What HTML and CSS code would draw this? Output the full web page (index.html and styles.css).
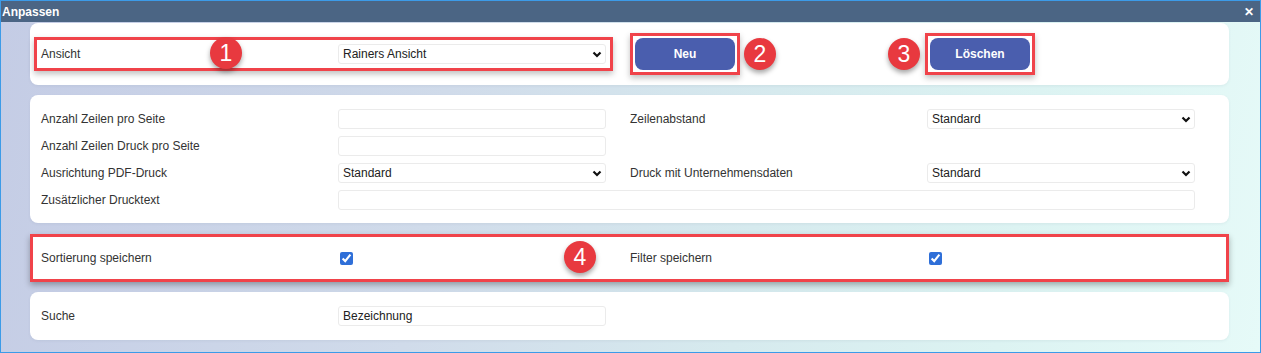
FILE: index.html
```html
<!DOCTYPE html>
<html lang="de">
<head>
    <meta charset="UTF-8">
    <meta name="viewport" content="width=device-width, initial-scale=1.0">
    <title>Anpassen</title>
    <link rel="stylesheet" href="styles.css">
</head>
<body>
    <div class="window">
        <!-- Titelleiste -->
        <div class="title-bar">
            <span>Anpassen</span>
            <span class="close">&#x2715;</span>
        </div>

        <div class="content">
            <!-- Ansicht -->
            <div class="card card-view">
                <div class="field-group marked">
                    <span class="label">Ansicht</span>
                    <div class="select-wrap">
                        <select class="field">
                            <option>Rainers Ansicht</option>
                        </select>
                        <svg class="chevron" width="10" height="7" viewBox="0 0 10 7"><path d="M1.5 1.5 L5 5 L8.5 1.5" fill="none" stroke="#111" stroke-width="2.2"/></svg>
                    </div>
                </div>
                <div class="btn-cell btn-new"><span class="btn-frame"><button class="btn">Neu</button></span></div>
                <div class="btn-cell btn-delete"><span class="btn-frame"><button class="btn">Löschen</button></span></div>
                <span class="badge badge-1">1</span>
                <span class="badge badge-2">2</span>
                <span class="badge badge-3">3</span>
            </div>

            <!-- Seiten- und Druckeinstellungen -->
            <div class="card">
                <span class="label">Anzahl Zeilen pro Seite</span>
                <input class="field" type="text">
                <span class="label">Zeilenabstand</span>
                <div class="select-wrap">
                    <select class="field"><option>Standard</option></select>
                    <svg class="chevron" width="10" height="7" viewBox="0 0 10 7"><path d="M1.5 1.5 L5 5 L8.5 1.5" fill="none" stroke="#111" stroke-width="2.2"/></svg>
                </div>

                <span class="label">Anzahl Zeilen Druck pro Seite</span>
                <input class="field" type="text">
                <span></span>
                <span></span>

                <span class="label">Ausrichtung PDF-Druck</span>
                <div class="select-wrap">
                    <select class="field"><option>Standard</option></select>
                    <svg class="chevron" width="10" height="7" viewBox="0 0 10 7"><path d="M1.5 1.5 L5 5 L8.5 1.5" fill="none" stroke="#111" stroke-width="2.2"/></svg>
                </div>
                <span class="label">Druck mit Unternehmensdaten</span>
                <div class="select-wrap">
                    <select class="field"><option>Standard</option></select>
                    <svg class="chevron" width="10" height="7" viewBox="0 0 10 7"><path d="M1.5 1.5 L5 5 L8.5 1.5" fill="none" stroke="#111" stroke-width="2.2"/></svg>
                </div>

                <span class="label">Zusätzlicher Drucktext</span>
                <input class="field field-wide" type="text">
            </div>

            <!-- Speichern -->
            <div class="card card-save">
                <span class="label">Sortierung speichern</span>
                <input class="check" type="checkbox" checked>
                <span class="label">Filter speichern</span>
                <input class="check" type="checkbox" checked>
                <span class="badge badge-4">4</span>
            </div>

            <!-- Suche -->
            <div class="card card-search">
                <span class="label">Suche</span>
                <input class="field" type="text" value="Bezeichnung">
            </div>
        </div>
    </div>
</body>
</html>
```

FILE: styles.css
```css
* {
    box-sizing: border-box;
}

body {
    margin: 0;
    font-family: "Liberation Sans", Arial, sans-serif;
    font-size: 12px;
    color: #333;
}

.window {
    width: 1261px;
    height: 353px;
    border: 1px solid #3c9be8;
    display: flex;
    flex-direction: column;
    background: linear-gradient(100deg, #c4cce5 0%, #d0dbea 35%, #d6eaee 60%, #dcf3f2 80%, #e6faf8 100%);
}

.title-bar {
    height: 21px;
    background: #4b6584;
    color: #fff;
    font-weight: bold;
    display: flex;
    justify-content: space-between;
    align-items: center;
    padding: 0 6px 0 1px;
}

.close {
    font-size: 12px;
}

.content {
    padding: 1px 31px 12px 29px;
    display: flex;
    flex-direction: column;
    gap: 10px;
}

.card {
    position: relative;
    background: #fff;
    border-radius: 8px;
    padding: 14px 11px 13px;
    display: grid;
    grid-template-columns: 297px 292px 297px 268px;
    grid-auto-rows: minmax(20px, auto);
    row-gap: 7px;
    align-items: center;
    box-shadow: 0 1px 3px rgba(80, 90, 120, 0.08);
}

.card-view {
    padding: 13px 11px;
}

.card-save {
    margin-top: 1px;
    padding: 14px 11px;
    border-radius: 0;
    box-shadow: inset 0 0 0 3px #f0434a, 0 3px 6px rgba(0, 0, 0, 0.3);
}

.card-search {
    padding: 14px 11px;
}

.label {
    color: #333;
    white-space: nowrap;
}

.field {
    width: 268px;
    height: 20px;
    border: 1px solid #ebebeb;
    border-radius: 3px;
    background: #fff;
    padding: 0 4px;
    font: inherit;
    color: #222;
    outline: none;
}

.field-wide {
    grid-column: 2 / 5;
    width: 100%;
}

.select-wrap {
    position: relative;
    width: 268px;
    height: 20px;
}

.select-wrap select {
    appearance: none;
    -webkit-appearance: none;
    padding-right: 20px;
}

.chevron {
    position: absolute;
    right: 4px;
    top: 7px;
    pointer-events: none;
}

.field-group {
    grid-column: 1 / 3;
    display: grid;
    grid-template-columns: 297px 268px;
    align-items: center;
    width: 565px;
}

.marked {
    box-shadow: 0 0 0 4px #fff, 0 0 0 7px #f0434a, 0 3px 6px 7px rgba(0, 0, 0, 0.25);
}

.btn-cell {
    display: flex;
}

.btn-new {
    padding-left: 3px;
}

.btn-delete {
    padding-left: 1px;
}

.btn-frame {
    display: flex;
    padding: 2px;
    background: #fff;
    box-shadow: 0 0 0 3px #f0434a, 0 3px 6px 3px rgba(0, 0, 0, 0.25);
}

.btn {
    width: 100px;
    height: 32px;
    border: none;
    border-radius: 8px;
    background: #4a5eae;
    color: #fff;
    font: inherit;
    font-weight: bold;
    cursor: pointer;
}

.check {
    width: 13px;
    height: 13px;
    margin: 0 0 0 2px;
    accent-color: #2f6fd8;
}

.badge {
    position: absolute;
    width: 32px;
    height: 32px;
    border-radius: 50%;
    background: #e8393f;
    color: #fff;
    font-size: 23px;
    display: flex;
    align-items: center;
    justify-content: center;
    box-shadow: 0 3px 5px rgba(0, 0, 0, 0.35);
}

.badge-1 {
    left: 180px;
    top: 14px;
}

.badge-2 {
    left: 714px;
    top: 15px;
}

.badge-3 {
    left: 858px;
    top: 15px;
}

.badge-4 {
    left: 534px;
    top: 7px;
}
```
